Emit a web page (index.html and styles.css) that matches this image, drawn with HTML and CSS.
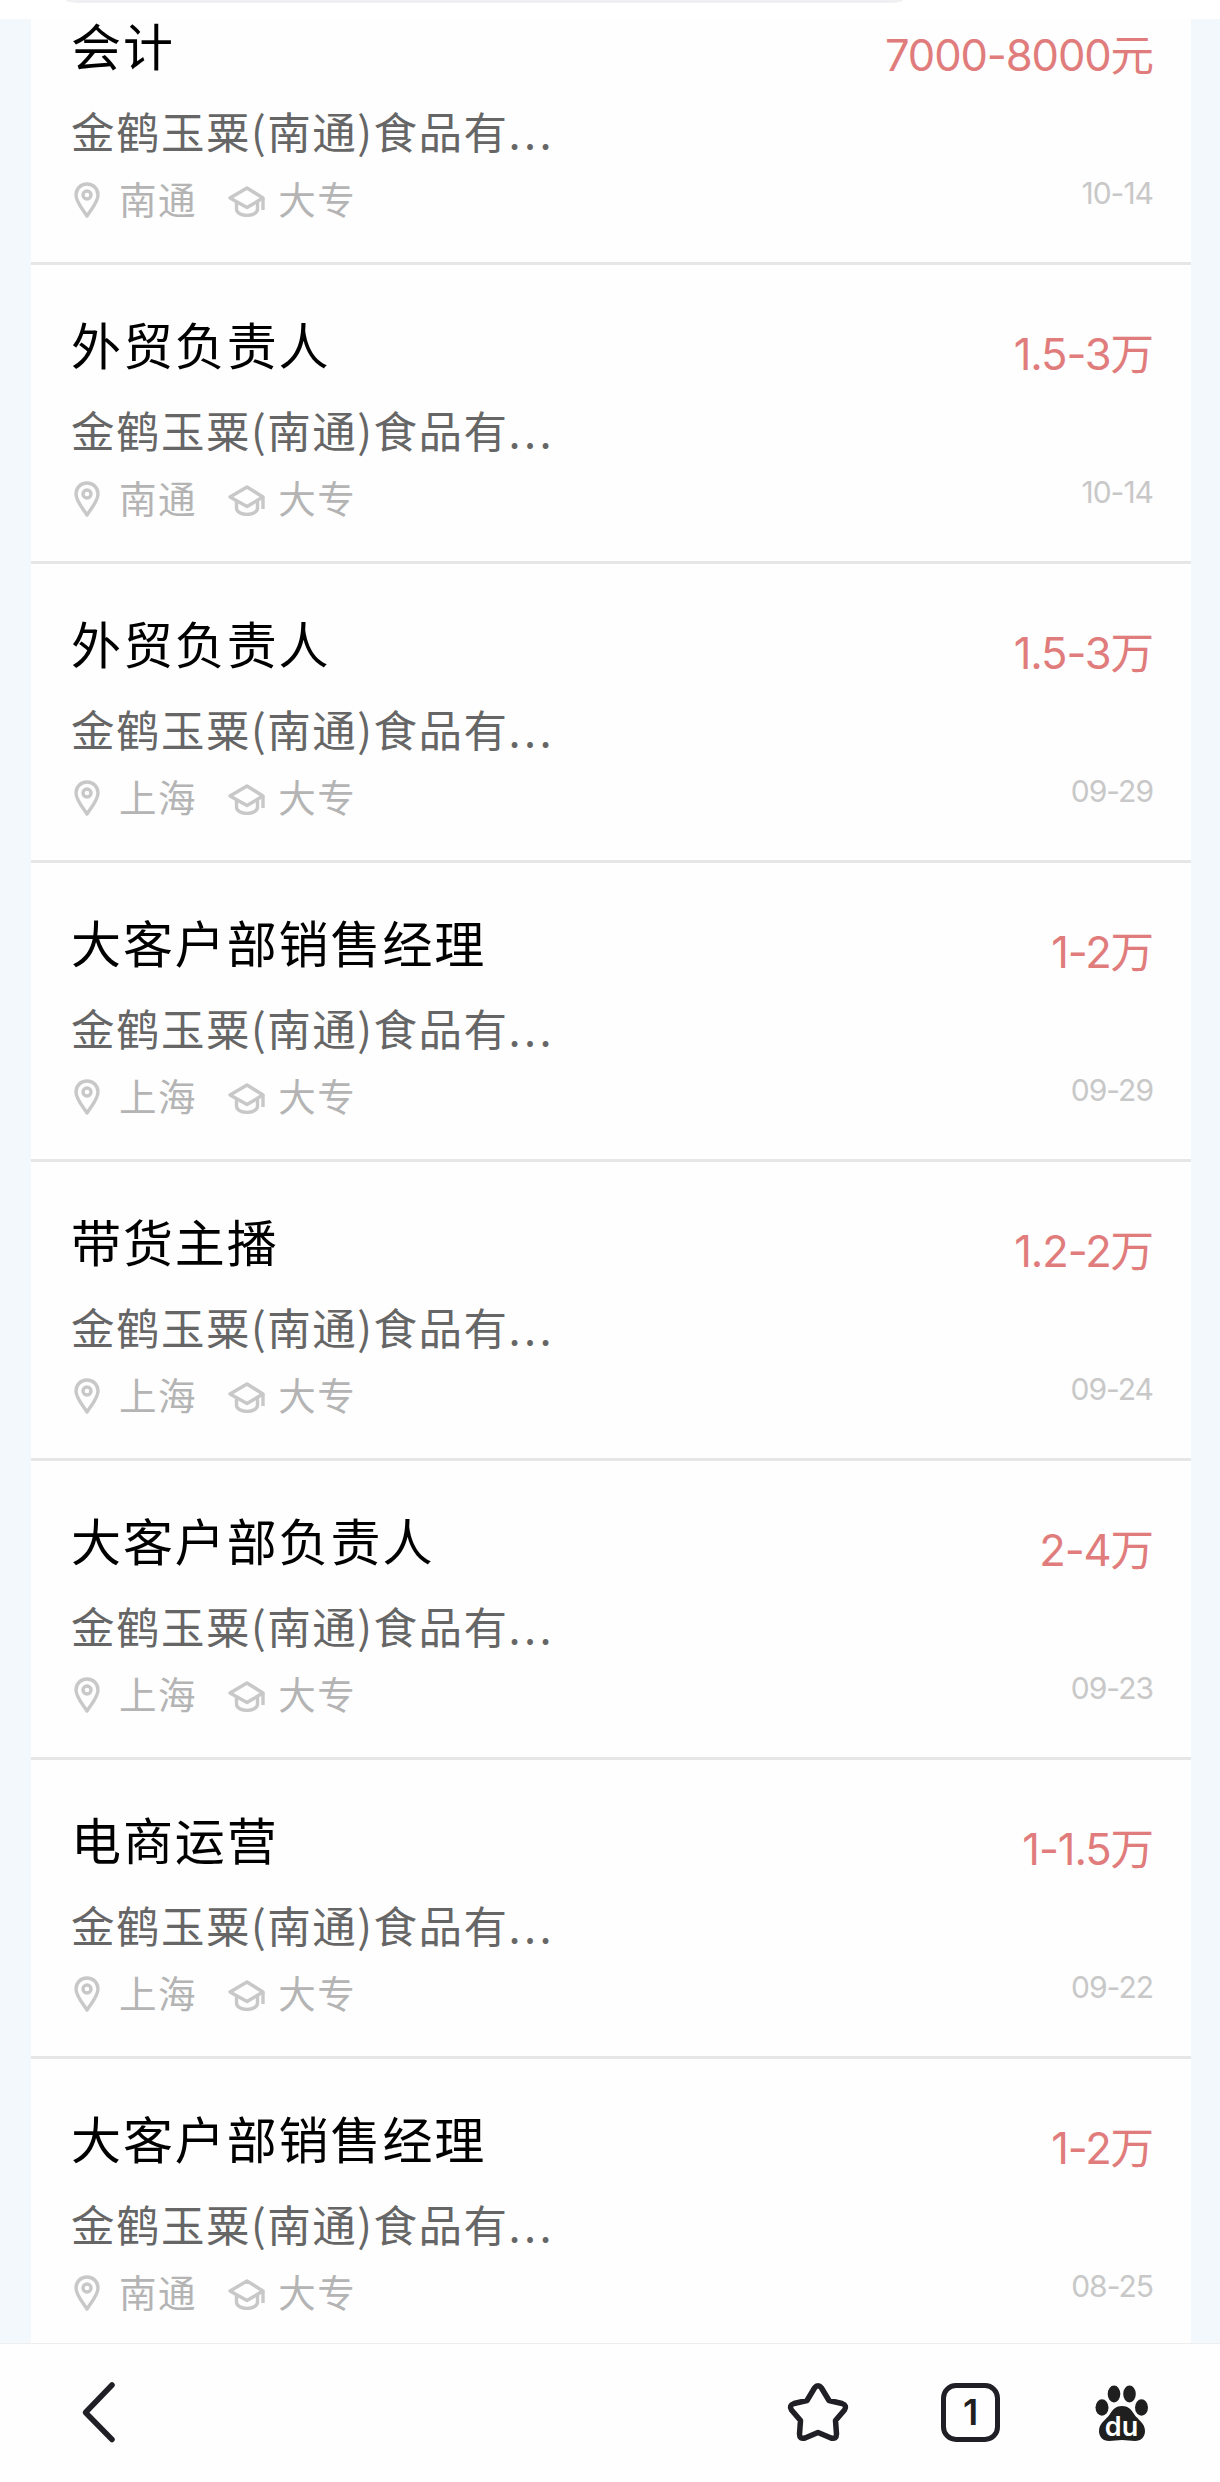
FILE: index.html
```html
<!DOCTYPE html>
<html lang="zh-CN">
  <head>
    <meta charset="UTF-8" />
    <meta name="viewport" content="width=device-width, initial-scale=1.0" />
    <title>招聘职位</title>
    <link rel="stylesheet" href="styles.css">
  </head>
  <body>
    <svg class="sprite">
      <symbol id="pin" viewBox="0 0 26 36">
        <path d="M13 2C6.500 2 2 7 2 13c0 7 6.500 14 11 21 4.500-7 11-14 11-21C24 7 19.500 2 13 2z" />
        <circle cx="13" cy="13" r="4" />
      </symbol>
      <symbol id="cap" viewBox="0 0 38 32">
        <path d="M19 3L2 13l17 9.500 16-9.500z" />
        <path d="M8.500 17v7c0 8.500 21 8.500 21 0v-7" />
        <path d="M35 13v12" />
      </symbol>
    </svg>

    <header class="header">
      <div class="search"></div>
    </header>

    <main class="list">
      <div class="job">
        <div class="info">
          <h2 class="title">会计</h2>
          <p class="company">金鹤玉粟(南通)食品有<span class="dots">...</span></p>
          <div class="meta">
            <svg class="pin"><use href="#pin" /></svg><span class="city">南通</span>
            <svg class="cap"><use href="#cap" /></svg><span>大专</span>
          </div>
        </div>
        <div class="side">
          <p class="salary">7000-8000元</p>
          <p class="date">10-14</p>
        </div>
      </div>
      <div class="job">
        <div class="info">
          <h2 class="title">外贸负责人</h2>
          <p class="company">金鹤玉粟(南通)食品有<span class="dots">...</span></p>
          <div class="meta">
            <svg class="pin"><use href="#pin" /></svg><span class="city">南通</span>
            <svg class="cap"><use href="#cap" /></svg><span>大专</span>
          </div>
        </div>
        <div class="side">
          <p class="salary">1.5-3万</p>
          <p class="date">10-14</p>
        </div>
      </div>
      <div class="job">
        <div class="info">
          <h2 class="title">外贸负责人</h2>
          <p class="company">金鹤玉粟(南通)食品有<span class="dots">...</span></p>
          <div class="meta">
            <svg class="pin"><use href="#pin" /></svg><span class="city">上海</span>
            <svg class="cap"><use href="#cap" /></svg><span>大专</span>
          </div>
        </div>
        <div class="side">
          <p class="salary">1.5-3万</p>
          <p class="date">09-29</p>
        </div>
      </div>
      <div class="job">
        <div class="info">
          <h2 class="title">大客户部销售经理</h2>
          <p class="company">金鹤玉粟(南通)食品有<span class="dots">...</span></p>
          <div class="meta">
            <svg class="pin"><use href="#pin" /></svg><span class="city">上海</span>
            <svg class="cap"><use href="#cap" /></svg><span>大专</span>
          </div>
        </div>
        <div class="side">
          <p class="salary">1-2万</p>
          <p class="date">09-29</p>
        </div>
      </div>
      <div class="job">
        <div class="info">
          <h2 class="title">带货主播</h2>
          <p class="company">金鹤玉粟(南通)食品有<span class="dots">...</span></p>
          <div class="meta">
            <svg class="pin"><use href="#pin" /></svg><span class="city">上海</span>
            <svg class="cap"><use href="#cap" /></svg><span>大专</span>
          </div>
        </div>
        <div class="side">
          <p class="salary">1.2-2万</p>
          <p class="date">09-24</p>
        </div>
      </div>
      <div class="job">
        <div class="info">
          <h2 class="title">大客户部负责人</h2>
          <p class="company">金鹤玉粟(南通)食品有<span class="dots">...</span></p>
          <div class="meta">
            <svg class="pin"><use href="#pin" /></svg><span class="city">上海</span>
            <svg class="cap"><use href="#cap" /></svg><span>大专</span>
          </div>
        </div>
        <div class="side">
          <p class="salary">2-4万</p>
          <p class="date">09-23</p>
        </div>
      </div>
      <div class="job">
        <div class="info">
          <h2 class="title">电商运营</h2>
          <p class="company">金鹤玉粟(南通)食品有<span class="dots">...</span></p>
          <div class="meta">
            <svg class="pin"><use href="#pin" /></svg><span class="city">上海</span>
            <svg class="cap"><use href="#cap" /></svg><span>大专</span>
          </div>
        </div>
        <div class="side">
          <p class="salary">1-1.5万</p>
          <p class="date">09-22</p>
        </div>
      </div>
      <div class="job">
        <div class="info">
          <h2 class="title">大客户部销售经理</h2>
          <p class="company">金鹤玉粟(南通)食品有<span class="dots">...</span></p>
          <div class="meta">
            <svg class="pin"><use href="#pin" /></svg><span class="city">南通</span>
            <svg class="cap"><use href="#cap" /></svg><span>大专</span>
          </div>
        </div>
        <div class="side">
          <p class="salary">1-2万</p>
          <p class="date">08-25</p>
        </div>
      </div>
    </main>

    <nav class="toolbar">
      <svg class="icon back" viewBox="0 0 80 80"><path d="M56 13L29.500 40.500l26.500 27" /></svg>
      <svg class="icon" viewBox="0 0 80 80">
        <path d="M33.500 16Q37 11.500 40.500 16L48 28.500L61 31.500Q66.500 33.500 63.500 38L54.500 48.500L55.500 62Q55.500 67.500 50 66L37 60.500L24 66Q18.500 67.500 18.500 62L19.500 48.500L10.500 38Q7.500 33.500 13 31.500L26 28.500Z" />
      </svg>
      <div class="tabs"><span>1</span></div>
      <svg class="icon paw" viewBox="0 0 80 80">
        <ellipse cx="33" cy="22" rx="6.300" ry="8.500" />
        <ellipse cx="48.500" cy="22" rx="6.300" ry="8.500" />
        <ellipse cx="21" cy="35.500" rx="6.500" ry="8.200" />
        <ellipse cx="60.500" cy="35.500" rx="6.500" ry="8.200" />
        <path d="M41 34c6 0 9 3 12 8 4 6 11 9 11 17 0 6-4 10-10 10-5 0-8-1-13-1s-8 1-13 1c-6 0-10-4-10-10 0-8 7-11 11-17 3-5 6-8 12-8z" />
        <text x="40.500" y="63.500" text-anchor="middle">du</text>
      </svg>
    </nav>
  </body>
</html>
```

FILE: styles.css
```css
* {
  margin: 0;
  padding: 0;
  box-sizing: border-box;
}
body {
  height: 2482px;
  display: flex;
  flex-direction: column;
  overflow: hidden;
  background: #f3f8fc;
  font-family: "Noto Sans CJK SC", sans-serif;
}
.sprite {
  display: none;
}
.header {
  height: 19px;
  flex: none;
  padding-left: 66px;
  background: #fff;
}
.search {
  width: 837px;
  height: 3px;
  border-radius: 0 0 14px 14px / 0 0 3px 3px;
  background: #f0f0f2;
}
.list {
  flex: 1;
  min-height: 0;
  margin: 0 29px 0 31px;
  background: #fefefe;
}
.job {
  height: 299px;
  display: flex;
  justify-content: space-between;
  padding: 53px 38px 0 40px;
  border-bottom: 3px solid #e6e6e6;
}
.job:first-child {
  height: 246px;
  padding-top: 0;
}
.job:last-child {
  height: 284px;
  border-bottom: 0;
}
.title {
  height: 50px;
  line-height: 50px;
  font-size: 50px;
  font-weight: 400;
  letter-spacing: 1.9px;
  color: #000;
}
.company {
  height: 60px;
  margin-top: 32px;
  line-height: 60px;
  font-size: 43.5px;
  letter-spacing: 1.5px;
  color: #666;
}
.dots {
  letter-spacing: 3.4px;
}
.meta {
  height: 50px;
  margin-top: 12px;
  display: flex;
  align-items: center;
  line-height: 50px;
  font-size: 37.5px;
  letter-spacing: 1.6px;
  color: #b4b4b4;
}
.meta svg {
  fill: none;
  stroke: #c8c8c8;
  stroke-width: 3.4;
  stroke-linejoin: round;
}
.pin {
  width: 26px;
  height: 36px;
  margin: 3px 19px 0 3px;
}
.cap {
  width: 38px;
  height: 32px;
  margin: 6px 12px 0 31px;
}
.side {
  padding-top: 6px;
  text-align: right;
  font-family: Inter, "Noto Sans CJK SC", sans-serif;
}
.salary {
  height: 60px;
  line-height: 60px;
  font-size: 43.5px;
  letter-spacing: -1.1px;
  color: #e07c7c;
}
.date {
  margin-top: 86px;
  height: 44px;
  line-height: 44px;
  font-size: 30px;
  letter-spacing: -1px;
  color: #c8c8c8;
}
.toolbar {
  height: 139px;
  flex: none;
  display: flex;
  align-items: center;
  padding: 0 59px 3px 56px;
  border-top: 1px solid #eee;
  background: #fefefe;
}
.icon {
  width: 80px;
  height: 80px;
  fill: none;
  stroke: #1f1f25;
  stroke-width: 5.5;
  stroke-linecap: round;
  stroke-linejoin: round;
}
.back {
  margin-right: auto;
}
.tabs {
  width: 59px;
  height: 59px;
  margin: 1px 81px 0 80px;
  border: 5.5px solid #1f1f25;
  border-radius: 15px;
  text-align: center;
  line-height: 49px;
  font-family: Inter, sans-serif;
  font-size: 36px;
  font-weight: 600;
  color: #1f1f1f;
}
.paw {
  fill: #1f1f1f;
  stroke: none;
}
.paw text {
  fill: #fff;
  font-family: Inter, sans-serif;
  font-size: 27px;
  font-weight: 600;
}
```
